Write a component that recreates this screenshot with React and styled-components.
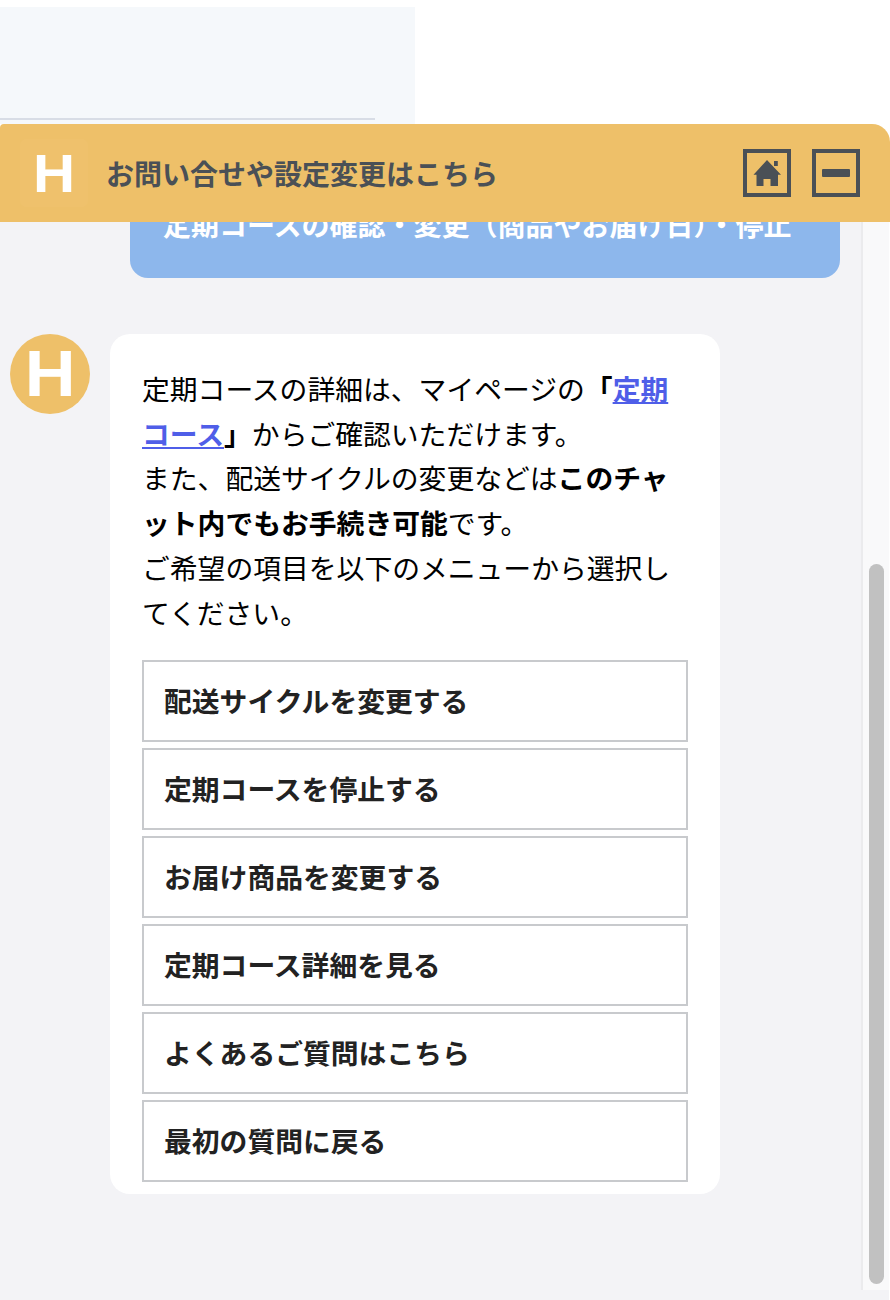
import React from 'react';
import styled, { createGlobalStyle } from 'styled-components';

const GlobalStyle = createGlobalStyle`
  html, body {
    margin: 0;
    padding: 0;
    background: #fff;
  }

  body {
    font-family: "Noto Sans CJK JP", "Noto Sans", sans-serif;
    overflow: hidden;
  }
`;

const Page = styled.div`
  width: 890px;
  height: 1300px;
  padding-top: 7px;
  box-sizing: border-box;
  display: flex;
  flex-direction: column;
`;

const TopPanel = styled.div`
  width: 415px;
  height: 117px;
  flex-shrink: 0;
  background: #f5f8fb;
  overflow: hidden;
`;

const TopRule = styled.div`
  width: 375px;
  height: 2px;
  margin-top: 111px;
  background: #d8dde6;
`;

const Widget = styled.div`
  flex: 1;
  min-height: 0;
  display: flex;
  flex-direction: column;
`;

const Header = styled.header`
  height: 98px;
  flex-shrink: 0;
  display: flex;
  align-items: center;
  padding: 0 30px 0 20px;
  background: #eec069;
  border-radius: 4px 18px 0 0;
  position: relative;
  z-index: 1;
`;

const HeaderLogo = styled.div`
  width: 68px;
  height: 68px;
  display: flex;
  align-items: center;
  justify-content: center;
  border-radius: 6px;
  background: #efc16c;
  color: #fff;
  font-family: "Liberation Sans", sans-serif;
  font-size: 53px;
  line-height: 1;
  font-weight: 700;
`;

const LogoLetter = styled.span`
  display: block;
  transform: scaleX(1.1);
`;

const HeaderTitle = styled.h1`
  flex: 1;
  margin: 0 0 0 18px;
  color: #4a5056;
  font-size: 28px;
  font-weight: 700;
  line-height: 1;
`;

const HeaderButton = styled.button`
  width: 48px;
  height: 48px;
  padding: 0;
  margin-left: ${props => props.$gap || 0}px;
  display: flex;
  align-items: center;
  justify-content: center;
  background: transparent;
  border: 4px solid #4a5056;
  color: #4a5056;
`;

const Body = styled.div`
  flex: 1;
  min-height: 0;
  display: flex;
  background: #f3f3f6;
`;

const Messages = styled.div`
  flex: 1;
  min-width: 0;
  overflow: hidden;
`;

const UserBubble = styled.div`
  width: 710px;
  box-sizing: border-box;
  margin: -20px 0 56px 130px;
  padding: 0 32px 31px 33px;
  background: #8db7ec;
  border-radius: 0 0 18px 18px;
  color: #fff;
  font-size: 28px;
  font-weight: 700;
  line-height: 44.8px;
  white-space: nowrap;
`;

const BotRow = styled.div`
  display: flex;
  gap: 20px;
  padding-left: 10px;
`;

const Avatar = styled.div`
  width: 80px;
  height: 80px;
  flex-shrink: 0;
  display: flex;
  align-items: center;
  justify-content: center;
  border-radius: 50%;
  background: #eec069;
  color: #fff;
  font-family: "Liberation Sans", sans-serif;
  font-size: 64px;
  line-height: 1;
  font-weight: 700;
`;

const BotBubble = styled.div`
  width: 610px;
  box-sizing: border-box;
  padding: 32px 32px 12px;
  background: #fff;
  border-radius: 20px;
`;

const BotText = styled.p`
  margin: 0 0 25px;
  color: #000;
  font-size: 27.8px;
  line-height: 44.8px;
  line-break: loose;

  a {
    color: #4f5ee8;
    font-weight: 700;
  }

  strong {
    font-weight: 700;
  }
`;

const Menu = styled.div`
  display: flex;
  flex-direction: column;
  gap: 6px;
`;

const MenuButton = styled.button`
  height: 82px;
  padding: 0 0 2px 20px;
  background: #fff;
  border: 2px solid #c8cacd;
  color: #222;
  font-family: inherit;
  font-size: 27.8px;
  font-weight: 700;
  text-align: left;
`;

const ScrollTrack = styled.div`
  width: 28px;
  height: 1068px;
  flex-shrink: 0;
  box-sizing: border-box;
  padding: 342px 5px 6px 6px;
  background: #f9f9fa;
  border-left: 2px solid #ebebed;
`;

const ScrollThumb = styled.div`
  height: 100%;
  background: #c1c1c1;
  border-radius: 9px;
`;

const RightGutter = styled.div`
  width: 1px;
  flex-shrink: 0;
  background: #fff;
`;

const menuItems = [
  '配送サイクルを変更する',
  '定期コースを停止する',
  'お届け商品を変更する',
  '定期コース詳細を見る',
  'よくあるご質問はこちら',
  '最初の質問に戻る',
];

const HomeIcon = () => (
  <svg width="29" height="28" viewBox="0 0 29 28" fill="currentColor">
    <path d="M14 1 L28 15.8 H25 V27 H17.5 V20 H10.5 V27 H3.5 V15.8 H0.5 Z" />
    <rect x="21" y="2" width="3.8" height="5" />
  </svg>
);

const MinusIcon = () => (
  <svg width="28" height="8" viewBox="0 0 28 8" fill="currentColor">
    <rect width="28" height="8" rx="1" />
  </svg>
);

const App = () => (
  <>
    <GlobalStyle />
    <Page>
      <TopPanel>
        <TopRule />
      </TopPanel>
      <Widget>
        <Header>
          <HeaderLogo>
            <LogoLetter>H</LogoLetter>
          </HeaderLogo>
          <HeaderTitle>お問い合せや設定変更はこちら</HeaderTitle>
          <HeaderButton aria-label="ホーム">
            <HomeIcon />
          </HeaderButton>
          <HeaderButton $gap={21} aria-label="最小化">
            <MinusIcon />
          </HeaderButton>
        </Header>
        <Body>
          <Messages>
            <UserBubble>定期コースの確認・変更（商品やお届け日）・停止</UserBubble>
            <BotRow>
              <Avatar>
                <LogoLetter>H</LogoLetter>
              </Avatar>
              <BotBubble>
                <BotText>
                  定期コースの詳細は、マイページの<strong>「<a href="#teiki">定期コース</a>」</strong>からご確認いただけます。
                  <br />
                  また、配送サイクルの変更などは<strong>このチャット内でもお手続き可能</strong>です。
                  <br />
                  ご希望の項目を以下のメニューから選択してください。
                </BotText>
                <Menu>
                  {menuItems.map(item => (
                    <MenuButton key={item}>{item}</MenuButton>
                  ))}
                </Menu>
              </BotBubble>
            </BotRow>
          </Messages>
          <ScrollTrack>
            <ScrollThumb />
          </ScrollTrack>
          <RightGutter />
        </Body>
      </Widget>
    </Page>
  </>
);

export default App;
